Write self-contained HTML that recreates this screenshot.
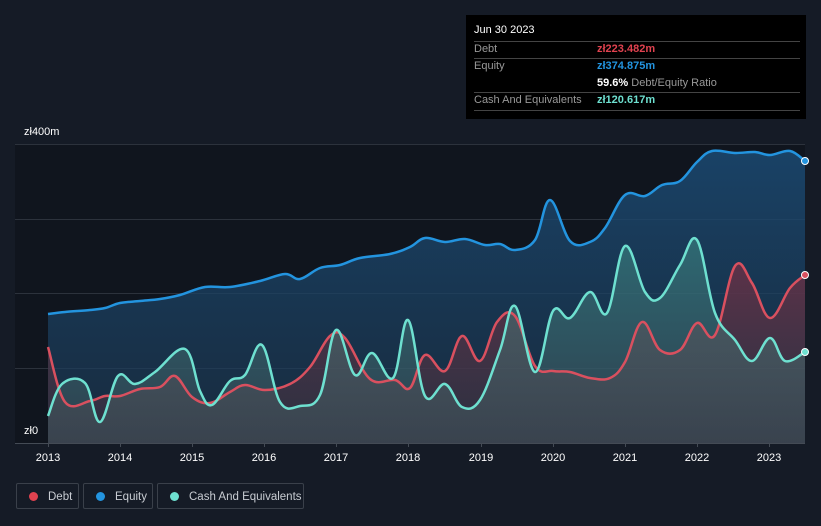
<!DOCTYPE html>
<html><head><style>
body{margin:0;width:821px;height:526px;background:#151b26;font-family:"Liberation Sans",sans-serif;overflow:hidden;position:relative}
.tt{position:absolute;left:466px;top:15px;width:340px;height:104px;background:#000;color:#fff;font-size:11px}
.tt .r{position:absolute;left:8px;right:6px;border-top:1px solid #444}
.lg{position:absolute;top:483px;height:26px;border:1px solid #3a404a;border-radius:2px;color:#c8ccd2;font-size:11.5px;line-height:26px;box-sizing:border-box}
.lg i{display:inline-block;width:9px;height:9px;border-radius:50%;margin:0 10px 0 12px;vertical-align:-1px}
.ax{position:absolute;color:#fff;font-size:11px}
</style></head><body>
<svg width="821" height="526" style="position:absolute;left:0;top:0">
<defs>
<linearGradient id="ge" x1="0" y1="0" x2="0" y2="1"><stop offset="0" stop-color="#1b4a73" stop-opacity=".85"/><stop offset="1" stop-color="#1c3a55" stop-opacity=".6"/></linearGradient>
<linearGradient id="gd" x1="0" y1="0" x2="0" y2="1"><stop offset="0" stop-color="#7a2e42" stop-opacity=".7"/><stop offset="1" stop-color="#4a3640" stop-opacity=".4"/></linearGradient>
<linearGradient id="gc" x1="0" y1="0" x2="0" y2="1"><stop offset="0" stop-color="#3f8f88" stop-opacity=".55"/><stop offset="1" stop-color="#4a5a60" stop-opacity=".45"/></linearGradient>
</defs>
<rect x="15" y="144" width="790" height="299" fill="#10151e"/>
<g stroke="#2c323c" stroke-width="1"><line x1="15" y1="144.5" x2="805" y2="144.5"/><line x1="15" y1="219.5" x2="805" y2="219.5"/><line x1="15" y1="293.5" x2="805" y2="293.5"/><line x1="15" y1="368.5" x2="805" y2="368.5"/></g>
<path id="fe" fill="url(#ge)"/><path id="fd" fill="url(#gd)"/><path id="fc" fill="url(#gc)"/>
<g fill="none" stroke-width="2.5" stroke-linejoin="round">
<path id="le" stroke="#2394df"/><path id="ld" stroke="#d9505f"/><path id="lc" stroke="#6ee0d0"/>
</g>
<circle cx="805" cy="161" r="3.5" fill="#2394df" stroke="#fff"/>
<circle cx="805" cy="275" r="3.5" fill="#d9505f" stroke="#fff"/>
<circle cx="805" cy="352" r="3.5" fill="#6ee0d0" stroke="#fff"/>
<line x1="15" y1="443.5" x2="805" y2="443.5" stroke="#444b55"/>
<g stroke="#444b55"><line x1="48.5" y1="443" x2="48.5" y2="447"/><line x1="120.5" y1="443" x2="120.5" y2="447"/><line x1="192.5" y1="443" x2="192.5" y2="447"/><line x1="264.5" y1="443" x2="264.5" y2="447"/><line x1="336.5" y1="443" x2="336.5" y2="447"/><line x1="408.5" y1="443" x2="408.5" y2="447"/><line x1="481.5" y1="443" x2="481.5" y2="447"/><line x1="553.5" y1="443" x2="553.5" y2="447"/><line x1="625.5" y1="443" x2="625.5" y2="447"/><line x1="697.5" y1="443" x2="697.5" y2="447"/><line x1="769.5" y1="443" x2="769.5" y2="447"/></g>
<g fill="#fff" font-size="11" text-anchor="middle" font-family="Liberation Sans"><text x="48" y="461">2013</text><text x="120" y="461">2014</text><text x="192" y="461">2015</text><text x="264" y="461">2016</text><text x="336" y="461">2017</text><text x="408" y="461">2018</text><text x="481" y="461">2019</text><text x="553" y="461">2020</text><text x="625" y="461">2021</text><text x="697" y="461">2022</text><text x="769" y="461">2023</text></g>
</svg>
<div class="ax" style="left:24px;top:126px">zł400m</div>
<div class="ax" style="left:24px;top:425px">zł0</div>
<div class="tt">
<div style="position:absolute;left:8px;top:9px">Jun 30 2023</div>
<div class="r" style="top:26px"></div>
<div style="position:absolute;left:8px;top:28px;color:#999">Debt</div><div style="position:absolute;left:131px;top:28px;color:#e0424f;font-weight:bold">zł223.482m</div>
<div class="r" style="top:43px"></div>
<div style="position:absolute;left:8px;top:45px;color:#999">Equity</div><div style="position:absolute;left:131px;top:45px;color:#2394df;font-weight:bold">zł374.875m</div>
<div style="position:absolute;left:131px;top:62px;color:#999"><b style="color:#fff">59.6%</b> Debt/Equity Ratio</div>
<div class="r" style="top:77px"></div>
<div style="position:absolute;left:8px;top:79px;color:#999">Cash And Equivalents</div><div style="position:absolute;left:131px;top:79px;color:#6ee0d0;font-weight:bold">zł120.617m</div>
<div class="r" style="top:95px"></div>
</div>
<div class="lg" style="left:16px;width:63px"><i style="background:#e0424f"></i>Debt</div>
<div class="lg" style="left:83px;width:70px"><i style="background:#2394df"></i>Equity</div>
<div class="lg" style="left:157px;width:147px"><i style="background:#6ee0d0"></i>Cash And Equivalents</div>
<script>
function P(s){return s.trim().split(/\s+/).map(function(p){return p.split(',').map(Number)});}
function smooth(a){var d='M'+a[0][0]+','+a[0][1];for(var i=0;i<a.length-1;i++){var p0=a[i-1]||a[i],p1=a[i],p2=a[i+1],p3=a[i+2]||p2;var t=0.18;var c1=[p1[0]+(p2[0]-p0[0])*t,p1[1]+(p2[1]-p0[1])*t],c2=[p2[0]-(p3[0]-p1[0])*t,p2[1]-(p3[1]-p1[1])*t];d+=' C'+c1+' '+c2+' '+p2;}return d;}
var E=P("48,314 65,312 90,310 105,308 120,303 140,301 160,299 180,295 205,287 230,287 260,281 285,274 300,279 320,268 340,265 360,258 390,254 410,247 425,238 445,242 465,239 485,245 500,244 515,250 535,240 550,200 570,241 590,242 605,228 625,195 645,196 662,185 680,181 697,162 712,151 735,153 755,152 770,155 790,151 805,161");
var D=P("48,347 65,402 90,401 105,396 120,396 140,389 160,387 175,376 192,397 210,403 230,392 245,385 265,390 290,384 310,367 330,336 345,338 370,379 395,380 410,388 425,355 445,371 462,336 480,361 497,322 515,316 535,366 553,371 570,372 590,378 610,378 625,362 642,322 660,350 680,350 697,323 715,335 735,266 752,283 770,318 790,288 805,275");
var C=P("48,416 62,384 85,383 100,422 118,376 135,384 155,372 185,349 200,391 212,405 230,381 245,375 262,345 280,402 300,406 320,395 336,330 355,375 372,353 393,378 408,320 425,396 445,384 462,407 480,400 500,350 515,306 535,372 553,311 570,318 590,292 607,313 625,246 645,292 660,298 680,265 697,240 715,313 735,340 752,361 770,338 785,361 805,352");
[[E,'e'],[D,'d'],[C,'c']].forEach(function(x){var s=smooth(x[0]);document.getElementById('l'+x[1]).setAttribute('d',s);document.getElementById('f'+x[1]).setAttribute('d',s+' L805,443 L48,443 Z');});
</script>
</body></html>
